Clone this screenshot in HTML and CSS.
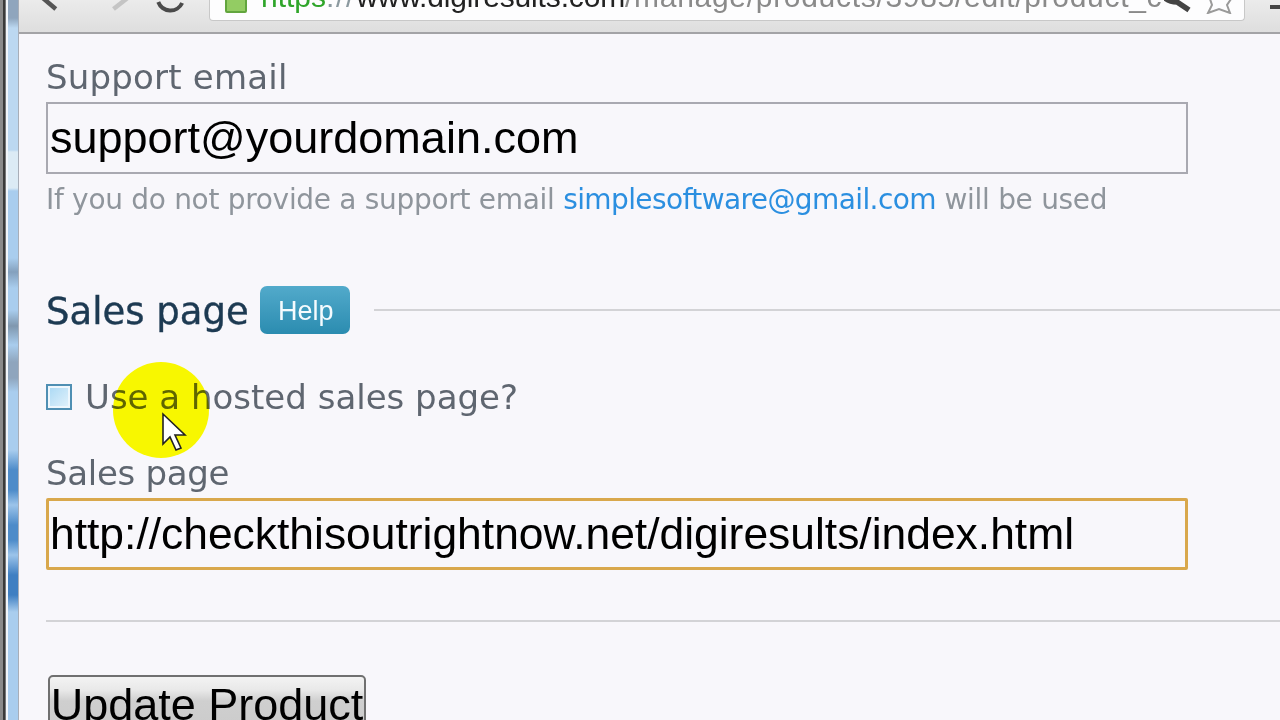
FILE: index.html
```html
<!DOCTYPE html>
<html lang="en">
<head>
<meta charset="utf-8">
<title>Edit product</title>
<link rel="stylesheet" href="styles.css">
</head>
<body>
<div class="screen">
  <div class="edge">
    <div class="edge-dark"></div>
    <div class="edge-gap"></div>
    <div class="edge-blue"></div>
    <div class="edge-line"></div>
  </div>
  <div class="window">
    <header class="toolbar">
      <svg class="nav" width="191" height="20" viewBox="0 0 191 20" aria-hidden="true">
        <path d="M24 -2 L37 9" fill="none" stroke="#555" stroke-width="4.500"/>
        <path d="M109 -2 L95 9" fill="none" stroke="#c4c4c4" stroke-width="4.500"/>
        <path d="M140 2 A13 13 0 0 0 164 3" fill="none" stroke="#4a4a4a" stroke-width="4"/>
      </svg>
      <div class="omnibox">
        <span class="lock"></span>
        <span class="url"><span class="scheme">https</span><span class="slashes">://</span><span class="host">www.digiresults.com</span><span class="path">/manage/products/3985/edit/product_c</span></span>
        <svg class="omni-icons" width="68" height="14" viewBox="0 0 68 14" aria-hidden="true">
          <path d="M1 -2 Q6 2 13 2 L25 10" stroke="#444" stroke-width="5.500" fill="none"/>
          <path d="M46 -1 L48 5 L44 13 L55 9 L66 13 L63 5 L67 -1" stroke="#9a9a9a" stroke-width="2" fill="#fdfdfe"/>
        </svg>
      </div>
      <div class="menu-bar"></div>
    </header>
    <main class="page">
      <label class="label">Support email</label>
      <div class="input">support@yourdomain.com</div>
      <p class="hint">If you do not provide a support email <a class="link">simplesoftware@gmail.com</a> will be used</p>
      <div class="legend">
        <h2 class="legend-title">Sales page</h2>
        <span class="help">Help</span>
        <span class="legend-rule"></span>
      </div>
      <div class="check-row">
        <span class="checkbox"></span>
        <span class="check-label">Use a hosted sales page?</span>
      </div>
      <label class="label label-sales">Sales page</label>
      <div class="input input-focus">http://checkthisoutrightnow.net/digiresults/index.html</div>
      <hr class="rule">
      <button class="submit">Update Product</button>
    </main>
  </div>
  <div class="spot"></div>
  <svg class="cursor" width="30" height="42" viewBox="0 0 30 42" aria-hidden="true">
    <path d="M2 2 L2 32 L9 25 L15 38 L20 36 L14 23 L24 23 Z" fill="#fff" stroke="#222" stroke-width="1.600"/>
  </svg>
</div>
</body>
</html>
```
FILE: styles.css
```css
* { box-sizing: border-box; }
html, body { margin: 0; height: 100%; }
body { overflow: hidden; background: #f8f7fb; }
.screen { position: relative; display: flex; width: 1280px; height: 720px; overflow: hidden; filter: blur(.45px); }
.edge { flex: 0 0 19px; display: flex; }
.edge-dark {
  flex: 0 0 6px;
  background:
    linear-gradient(90deg, #8a8a8a 0 3.500px, #3a3a3a 3.500px 5px, #777 5px 6px);
}
.edge-gap { flex: 0 0 1.500px; background: #f2f6fa; }
.edge-blue {
  flex: 1;
  background: linear-gradient(180deg,
    #8fa5bd 0, #8fa5bd 18px, #bcd8f1 28px, #bcd8f1 150px, #dcebf5 152px, #dcebf5 188px, #a9cdee 191px,
    #a9cdee 258px, #84a0bd 272px, #a9cdee 288px, #a9cdee 310px, #7f97ae 326px, #a9cdee 345px,
    #8fa5bd 362px, #8fa5bd 378px, #a9cdee 392px, #a9cdee 450px, #4d8bc9 470px, #4d8bc9 490px, #9cc4ea 505px,
    #4d8bc9 525px, #4d8bc9 540px, #9cc4ea 555px, #3f7fc2 575px, #3f7fc2 595px, #a9cdee 612px, #a9cdee 720px);
}
.edge-line { flex: 0 0 1.500px; background: #a8aeb8; }
.window { flex: 1; display: flex; flex-direction: column; min-width: 0; }
.toolbar {
  flex: 0 0 34px;
  display: flex;
  align-items: flex-end;
  overflow: hidden;
  padding-bottom: 11px;
  background: linear-gradient(#ebebeb, #dedede);
  border-bottom: 2px solid #a3a3a6;
}
.nav { flex: none; width: 190px; align-self: flex-start; }
.omnibox {
  flex: 0 0 1036px;
  height: 40px;
  display: flex;
  align-items: flex-end;
  padding: 0 12px 6px 15px;
  background: #fdfdfe;
  border: 1px solid #c8c8c8;
  border-top: 0;
  border-radius: 0 0 4px 4px;
  overflow: hidden;
}
.lock { flex: none; width: 22px; height: 16px; margin: 0 14px 1px 0; background: #93cc63; border: 2px solid #62a53e; border-radius: 2px; }
.url { flex: 1; font: 30px/34px "Liberation Sans", sans-serif; white-space: nowrap; overflow: hidden; }
.scheme { color: #2fa52a; }
.slashes { color: #8c9aa0; letter-spacing: 1.7px; }
.host { color: #222; letter-spacing: -.15px; }
.path { color: #8a8a8a; letter-spacing: .7px; }
.omni-icons { flex: none; }
.menu-bar { flex: 1; height: 4px; margin: 0 0 12px 25px; background: #444; }
.page { flex: 1; padding: 25px 0 0 27px; background: #f8f7fb; min-height: 0; }
.label { display: block; font: 34px/36px "DejaVu Sans", sans-serif; color: #5f6670; letter-spacing: .2px; }
.input {
  width: 1142px;
  height: 72px;
  margin-top: 7px;
  padding-left: 2px;
  border: 2px solid #a9a9b1;
  font: 45px/68px "Liberation Sans", sans-serif;
  color: #000;
  white-space: nowrap;
}
.hint { margin: 8px 0 0; font: 28px/36px "DejaVu Sans", sans-serif; color: #8f959c; letter-spacing: -.3px; }
.link { color: #2b8fe0; letter-spacing: -.6px; }
.legend { display: flex; align-items: center; margin-top: 68px; }
.legend-title { margin: 0 0 -2px; padding-top: 2px; font: 400 37px/48px "DejaVu Sans", sans-serif; color: #1d3a52; -webkit-text-stroke: .4px #1d3a52; }
.help {
  margin-left: 11px;
  width: 90px; height: 48px;
  display: flex; align-items: center; justify-content: center;
  padding: 2px 0 0 2px;
  border-radius: 7px;
  background: linear-gradient(#52aacb, #2b8cb0);
  color: #f5fbfe;
  font: 27px "Liberation Sans", sans-serif;
}
.legend-rule { flex: 1; height: 2px; margin-left: 24px; background: #d3d3d6; }
.check-row { display: flex; align-items: center; gap: 13px; margin-top: 43px; }
.checkbox {
  width: 26px; height: 26px;
  border: 2px solid #4f8fb3;
  background: linear-gradient(135deg, #a8d8f4, #e4f3fc);
  box-shadow: inset 0 0 0 2px #eef7fd;
}
.check-label { font: 34px/40px "DejaVu Sans", sans-serif; color: #5f6670; }
.label-sales { margin-top: 38px; letter-spacing: -.3px; }
.input-focus { border: 3px solid #d9a84c; border-radius: 2px; padding-left: 1px; font-size: 44.4px; line-height: 66px; }
.rule { margin: 50px 0 0; border: 0; height: 2px; background: #d3d3d6; }
.submit {
  display: block;
  margin: 53px 0 0 2px;
  width: 318px; height: 72px;
  padding: 0 0 16px;
  border: 2px solid #707070;
  border-radius: 5px;
  background: linear-gradient(#f3f3f3, #e8e8e8 20%, #cfcfcf 35%, #c9c9c9);
  font: 45px/56px "Liberation Sans", sans-serif;
  color: #000;
  white-space: nowrap;
}
.spot { position: absolute; left: 113px; top: 362px; width: 96px; height: 96px; border-radius: 50%; background: #ffff00; mix-blend-mode: multiply; }
.cursor { position: absolute; left: 161px; top: 412px; }
```
